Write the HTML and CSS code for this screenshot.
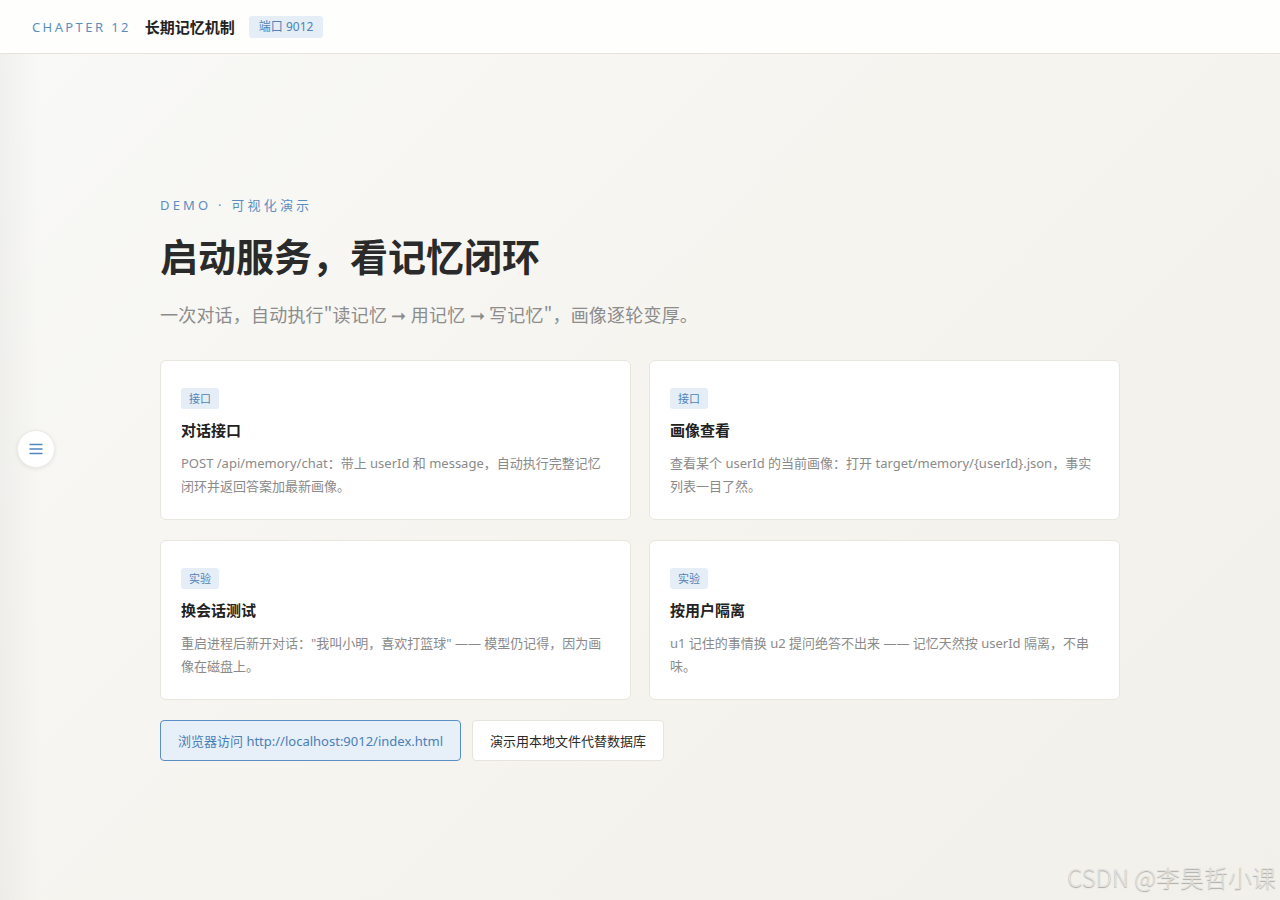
FILE: index.html
```html
<!DOCTYPE html>
<html lang="zh-CN">
<head>
<meta charset="utf-8">
<title>长期记忆机制</title>
<link rel="stylesheet" href="styles.css">
</head>
<body>
<header class="topbar">
  <span class="chapter">CHAPTER 12</span>
  <span class="chapter-title">长期记忆机制</span>
  <span class="port">端口 9012</span>
</header>
<button class="menu-btn" aria-label="菜单">
  <svg width="16" height="14" viewBox="0 0 16 14"><path d="M1.5 2.5h13M1.5 7h13M1.5 11.5h13" stroke="#4f87bf" stroke-width="1.5" fill="none"/></svg>
</button>
<main class="main">
  <section class="content">
    <div class="eyebrow">DEMO · 可视化演示</div>
    <h1 class="title">启动服务，看记忆闭环</h1>
    <p class="subtitle">一次对话，自动执行"读记忆 ➞ 用记忆 ➞ 写记忆"，画像逐轮变厚。</p>
    <div class="grid">
      <div class="card">
        <span class="tag">接口</span>
        <h3 class="card-title">对话接口</h3>
        <p class="card-desc">POST /api/memory/chat：带上 userId 和 message，自动执行完整记忆闭环并返回答案加最新画像。</p>
      </div>
      <div class="card">
        <span class="tag">接口</span>
        <h3 class="card-title">画像查看</h3>
        <p class="card-desc">查看某个 userId 的当前画像：打开 target/memory/{userId}.json，事实列表一目了然。</p>
      </div>
      <div class="card">
        <span class="tag">实验</span>
        <h3 class="card-title">换会话测试</h3>
        <p class="card-desc">重启进程后新开对话："我叫小明，喜欢打篮球" —— 模型仍记得，因为画像在磁盘上。</p>
      </div>
      <div class="card">
        <span class="tag">实验</span>
        <h3 class="card-title">按用户隔离</h3>
        <p class="card-desc">u1 记住的事情换 u2 提问绝答不出来 —— 记忆天然按 userId 隔离，不串味。</p>
      </div>
    </div>
    <div class="actions">
      <span class="btn btn-primary">浏览器访问 http://localhost:9012/index.html</span>
      <span class="btn">演示用本地文件代替数据库</span>
    </div>
  </section>
</main>
<div class="watermark">CSDN @李昊哲小课</div>
</body>
</html>
```

FILE: styles.css
```css
* { box-sizing: border-box; }
html, body { margin: 0; padding: 0; }
body {
  width: 1280px;
  height: 900px;
  overflow: hidden;
  font-family: "Noto Sans", "Noto Sans CJK SC", sans-serif;
  color: #2a2a2a;
  background:
    linear-gradient(90deg, rgba(0,0,0,0.035) 0px, rgba(0,0,0,0) 40px),
    linear-gradient(135deg, #f9f9f7 0%, #f5f4ef 50%, #f2f0ea 100%);
  position: relative;
}
.topbar {
  height: 54px;
  background: #fefefc;
  border-bottom: 1px solid #e7e3da;
  display: flex;
  align-items: center;
  padding-left: 32px;
}
.chapter {
  font-size: 13px;
  letter-spacing: 2.4px;
  color: #5b8ebf;
  margin-right: 14px;
}
.chapter-title {
  font-family: "Noto Sans CJK SC", sans-serif;
  font-size: 15px;
  font-weight: 700;
  color: #222;
  margin-right: 14px;
}
.port {
  font-size: 12px;
  color: #4f82b6;
  background: #e5eef7;
  border-radius: 3px;
  padding: 0 10px;
  height: 22px;
  line-height: 22px;
}
.menu-btn {
  position: absolute;
  left: 17px;
  top: 430px;
  width: 38px;
  height: 38px;
  border-radius: 50%;
  border: 1px solid #eeece6;
  background: #fff;
  box-shadow: 0 1px 4px rgba(0,0,0,0.08);
  display: flex;
  align-items: center;
  justify-content: center;
  padding: 0;
}
.main {
  padding-left: 160px;
  padding-top: 141px;
}
.content { width: 960px; }
.eyebrow {
  font-size: 13px;
  letter-spacing: 3.2px;
  color: #5b8ebf;
  line-height: 20px;
}
.title {
  font-family: "Noto Sans CJK SC", sans-serif;
  font-size: 38px;
  font-weight: 700;
  color: #2a2a2a;
  margin: 12px 0 0;
  line-height: 56px;
}
.subtitle {
  font-family: "Noto Sans CJK SC", sans-serif;
  font-size: 18px;
  letter-spacing: 0.2px;
  color: #8c8c8c;
  margin: 18px 0 0;
  line-height: 26px;
}
.grid {
  margin-top: 33px;
  display: grid;
  grid-template-columns: 471px 471px;
  column-gap: 18px;
  row-gap: 20px;
}
.card {
  background: #fff;
  border: 1px solid #e9e6de;
  border-radius: 6px;
  padding: 27px 20px 0;
  height: 160px;
  display: flex;
  flex-direction: column;
  align-items: flex-start;
}
.tag {
  font-family: "Noto Sans CJK SC", sans-serif;
  font-size: 11px;
  color: #4f82b6;
  background: #e5eef7;
  border-radius: 3px;
  padding: 0 8px;
  height: 21px;
  line-height: 21px;
}
.card-title {
  font-family: "Noto Sans CJK SC", sans-serif;
  font-size: 15px;
  font-weight: 700;
  color: #222;
  margin: 10px 0 0;
  line-height: 22px;
}
.card-desc {
  font-size: 13px;
  color: #8a8a8a;
  line-height: 23px;
  margin: 11px 0 0;
}
.actions {
  display: flex;
  gap: 11px;
  margin-top: 20px;
}
.btn {
  display: inline-flex;
  align-items: center;
  height: 41px;
  padding: 0 17px;
  font-size: 13px;
  color: #2a2a2a;
  background: #fff;
  border: 1px solid #e7e4dc;
  border-radius: 4px;
}
.btn-primary {
  background: #e7eff8;
  border-color: #5a8fc6;
  color: #4a80b8;
}
.watermark {
  position: absolute;
  right: 4px;
  bottom: 6px;
  font-family: "Noto Sans CJK SC", sans-serif;
  font-size: 24px;
  font-weight: 300;
  color: #e4e2de;
  text-shadow: 0 1px 1px rgba(0,0,0,0.3);
}
```
